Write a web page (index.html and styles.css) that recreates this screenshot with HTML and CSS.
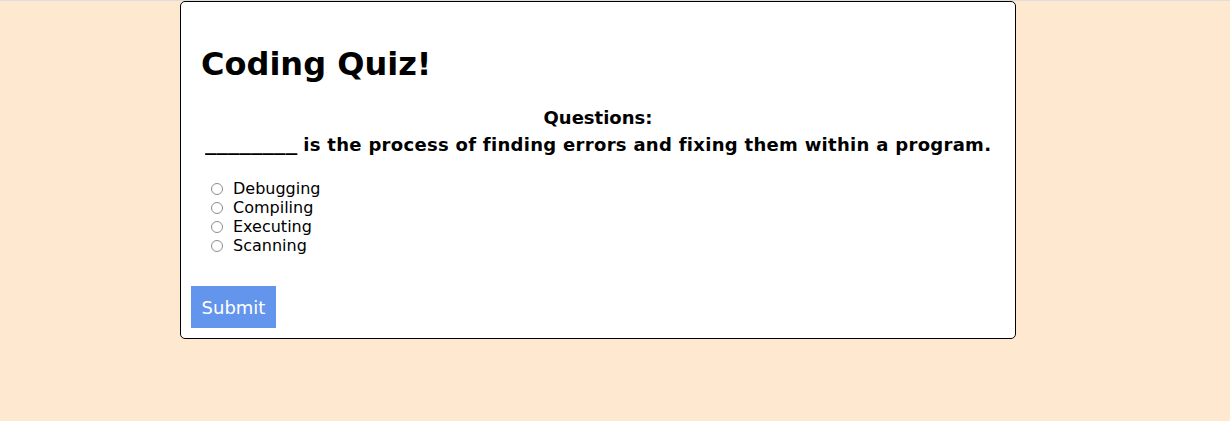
FILE: index.html
```html
<!DOCTYPE html>
<html lang="en">
<head>
<meta charset="utf-8">
<title>Coding Quiz!</title>
<link rel="stylesheet" href="styles.css">
</head>
<body>
<div class="page">
  <main class="card">
    <h1 class="title">Coding Quiz!</h1>
    <h2 class="label">Questions:</h2>
    <p class="question"><span class="blank">________</span> is the process of finding errors and fixing them within a program.</p>
    <form class="options">
      <label class="option"><input type="radio" name="answer" value="debugging"><span>Debugging</span></label>
      <label class="option"><input type="radio" name="answer" value="compiling"><span>Compiling</span></label>
      <label class="option"><input type="radio" name="answer" value="executing"><span>Executing</span></label>
      <label class="option"><input type="radio" name="answer" value="scanning"><span>Scanning</span></label>
    </form>
    <div class="actions">
      <button class="submit" type="button">Submit</button>
    </div>
  </main>
</div>
</body>
</html>
```
FILE: styles.css
```css
* { box-sizing: border-box; }

html, body {
  margin: 0;
  height: 100%;
}

body {
  background: #ffe8d0;
  font-family: "DejaVu Sans", Verdana, sans-serif;
  color: #000;
}

.page {
  border-top: 1px solid #dedede;
  min-height: 100%;
}

.card {
  margin-left: 180px;
  width: 836px;
  background: #fff;
  border: 1px solid #000;
  border-radius: 5px;
  padding: 0 10px 10px 10px;
  display: flex;
  flex-direction: column;
}

.title {
  margin: 43px 0 0 10px;
  font-size: 32px;
  line-height: 38px;
  font-weight: bold;
}

.label {
  margin: 21px 0 0 0;
  font-size: 18px;
  line-height: 27px;
  font-weight: bold;
  text-align: center;
}

.question {
  margin: 0;
  font-size: 18px;
  line-height: 27px;
  font-weight: bold;
  text-align: center;
  letter-spacing: 0.3px;
}

.blank {
  display: inline-block;
  letter-spacing: 0;
  transform: scaleX(1.28);
  transform-origin: left center;
  margin-right: 20px;
}

.options {
  margin: 21px 0 0 20px;
  display: flex;
  flex-direction: column;
}

.option {
  display: flex;
  align-items: center;
  font-size: 16px;
  line-height: 19px;
  height: 19px;
}

.option input {
  appearance: none;
  -webkit-appearance: none;
  width: 12px;
  height: 12px;
  margin: 0 10px 0 0;
  border: 1px solid #8c8c8c;
  border-radius: 50%;
  background: #fff;
  flex: none;
}

.actions {
  margin-top: 31px;
  display: flex;
}

.submit {
  background: #6495ed;
  color: #fff;
  border: none;
  width: 85px;
  height: 42px;
  padding: 1px 0 0 0;
  font-family: "DejaVu Sans", Verdana, sans-serif;
  font-size: 18px;
  line-height: 41px;
  text-align: center;
}
```
